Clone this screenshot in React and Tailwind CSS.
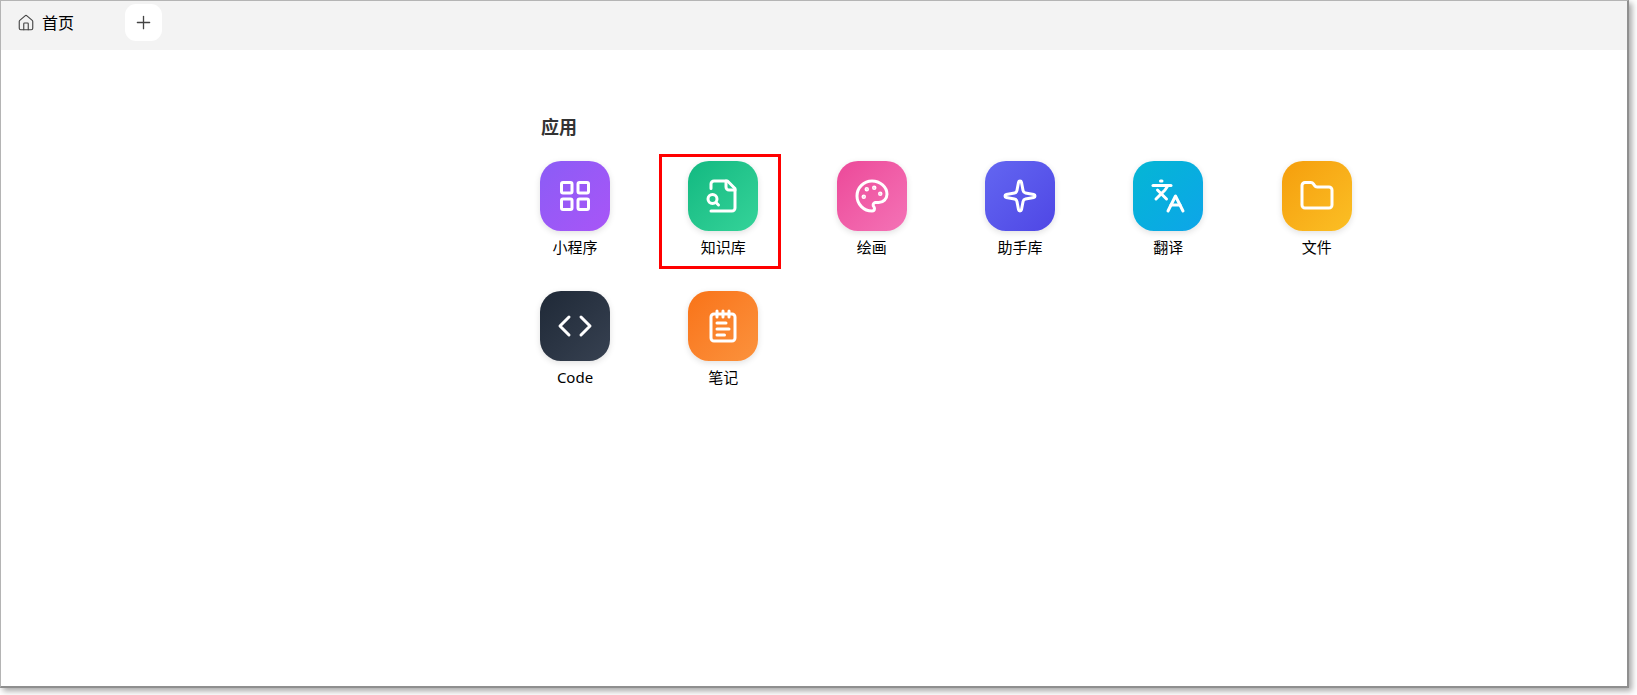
import {
  House,
  Plus,
  LayoutGrid,
  Sparkle,
  Languages,
  Folder,
  Code,
  NotepadText,
} from "lucide-react";

// older lucide drawings, the installed version has different strokes
const FileSearchOld = (props) => (
  <svg viewBox="0 0 24 24" fill="none" stroke="currentColor" strokeWidth="2" strokeLinecap="round" strokeLinejoin="round" {...props}>
    <path d="M4 22h14a2 2 0 0 0 2-2V7l-5-5H6a2 2 0 0 0-2 2v3" />
    <path d="M14 2v4a2 2 0 0 0 2 2h4" />
    <path d="M5 17a3 3 0 1 0 0-6 3 3 0 0 0 0 6z" />
    <path d="m9 18-1.5-1.5" />
  </svg>
);

const PaletteOld = (props) => (
  <svg viewBox="0 0 24 24" fill="none" stroke="currentColor" strokeWidth="2" strokeLinecap="round" strokeLinejoin="round" {...props}>
    <circle cx="13.5" cy="6.5" r=".5" fill="currentColor" />
    <circle cx="17.5" cy="10.5" r=".5" fill="currentColor" />
    <circle cx="8.5" cy="7.5" r=".5" fill="currentColor" />
    <circle cx="6.5" cy="12.5" r=".5" fill="currentColor" />
    <path d="M12 2C6.5 2 2 6.5 2 12s4.5 10 10 10c.926 0 1.648-.746 1.648-1.688 0-.437-.18-.835-.437-1.125-.29-.289-.438-.652-.438-1.125a1.64 1.64 0 0 1 1.668-1.668h1.996c3.051 0 5.555-2.503 5.555-5.554C21.965 6.012 17.461 2 12 2z" />
  </svg>
);

const apps = [
  { name: "小程序", icon: LayoutGrid, bg: "from-[#8b5cf6] to-[#a855f7]" },
  { name: "知识库", icon: FileSearchOld, bg: "from-[#10b981] to-[#34d399]", marked: true },
  { name: "绘画", icon: PaletteOld, bg: "from-[#ec4899] to-[#f472b6]" },
  { name: "助手库", icon: Sparkle, bg: "from-[#6366f1] to-[#4f46e5]" },
  { name: "翻译", icon: Languages, bg: "from-[#06b6d4] to-[#0ea5e9]" },
  { name: "文件", icon: Folder, bg: "from-[#f59e0b] to-[#fbbf24]" },
  { name: "Code", icon: Code, bg: "from-[#1f2937] to-[#374151]" },
  { name: "笔记", icon: NotepadText, bg: "from-[#f97316] to-[#fb923c]" },
];

const AppItem = ({ app }) => {
  const Icon = app.icon;
  return (
    <div className="relative flex flex-col items-center">
      <div
        className={`w-[70px] h-[70px] rounded-[21px] bg-gradient-to-br ${app.bg} flex items-center justify-center shadow-[0_2px_6px_rgba(0,0,0,0.12)]`}
      >
        <Icon width={36} height={36} color="#ffffff" strokeWidth={2} />
      </div>
      <span className="mt-[5px] text-[15px] leading-[22px] text-black whitespace-nowrap">{app.name}</span>
      {app.marked && (
        <div className="absolute left-[-29px] top-[-7px] w-[122px] h-[115px] border-[3px] border-[#ff0000]" />
      )}
    </div>
  );
};

const App = () => {
  return (
    <div className="w-[1637px] h-[695px] bg-white overflow-hidden font-['Noto_Sans','Noto_Sans_CJK_SC',sans-serif]">
      <div className="w-[1629px] h-[688px] bg-white border border-[#b4b4b4] border-r-2 border-b-2 border-r-[#8f8f8f] border-b-[#8f8f8f] shadow-[3px_3px_6px_rgba(0,0,0,0.35)]">
        <div className="h-[49px] bg-[#f3f3f3] flex items-start">
          <div className="w-[124px] h-[44px] flex items-center pl-[16px] gap-[7px]">
            <House size={18} color="#444444" strokeWidth={1.5} />
            <span className="text-[16px] text-black">首页</span>
          </div>
          <button className="mt-[3px] w-[37px] h-[37px] rounded-[11px] bg-white flex items-center justify-center">
            <Plus size={21} color="#444444" strokeWidth={1.5} />
          </button>
        </div>

        <div className="pl-[539px] pt-[65px]">
          <h2 className="pl-[1px] text-[18px] leading-6 font-bold text-[#333333]">应用</h2>
          <div className="mt-[22px] grid grid-cols-[repeat(6,70px)] gap-x-[78.35px] gap-y-[33px]">
            {apps.map((app) => (
              <AppItem key={app.name} app={app} />
            ))}
          </div>
        </div>
      </div>
    </div>
  );
};

export default App;
